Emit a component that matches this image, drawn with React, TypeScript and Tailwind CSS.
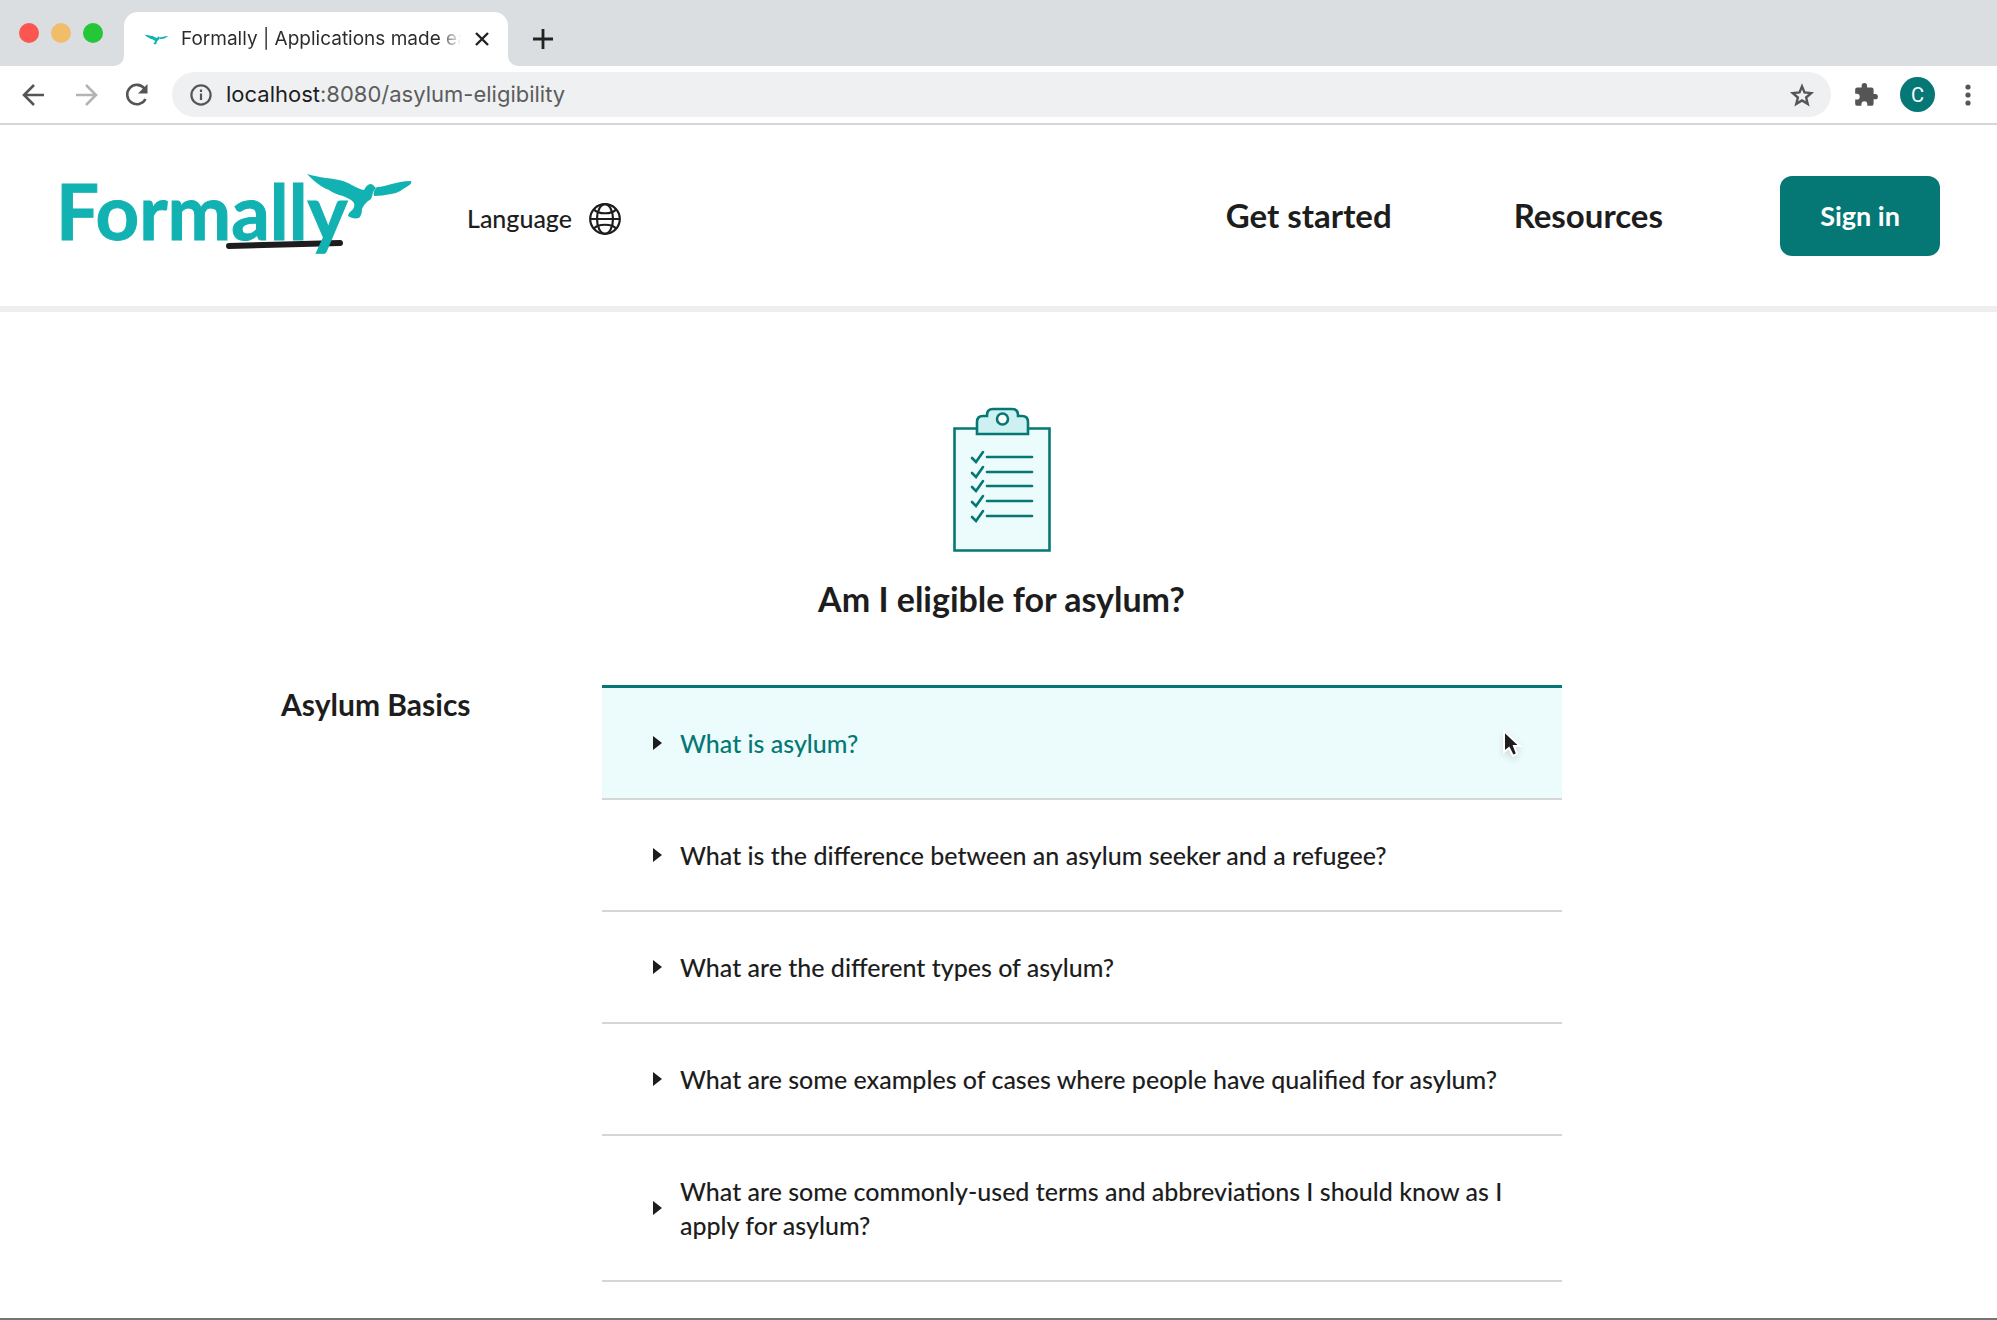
import React, { useState } from "react";

const questions = [
  "What is asylum?",
  "What is the difference between an asylum seeker and a refugee?",
  "What are the different types of asylum?",
  "What are some examples of cases where people have qualified for asylum?",
  "What are some commonly-used terms and abbreviations I should know as I apply for asylum?",
];

const BODY =
  "M2 1C14 5 28 5 38 8C47 11 52 16 59 17C62 11 66 9 69 13L71 15C67 19 68 22 66 26C61 29 59 32 57 36C57 40 56 43 54 45C50 46 46 45 43 43C44 38 48 38 49 34C50 31 49 29 46 27C36 21 30 22 24 17C14 13 8 7 2 1Z";
const WING = "M72 14C82 14 90 8 106 8C107 10 105 12 103 13C96 17 94 20 86 21C80 22 75 23 69 23C68 20 69 17 72 14Z";

function Bird({ className }: { className: string }) {
  return (
    <svg viewBox="0 0 108 48" className={className} fill="#12b1b2" aria-hidden="true">
      <path d={BODY} />
      <path d={WING} />
    </svg>
  );
}

function Logo() {
  return (
    <svg viewBox="0 0 354 90" className="h-[90px] w-[354px] overflow-visible" role="img" aria-label="Formally">
      <path d="M173 75L284 72" stroke="#1d1d1d" strokeWidth="6" strokeLinecap="round" />
      <text
        x="0"
        y="69"
        fill="#12b1b2"
        stroke="#12b1b2"
        strokeWidth="1"
        className="font-['Lato'] text-[76px] font-bold"
      >
        Formally
      </text>
      <g transform="translate(249 2)" fill="#12b1b2">
        <path d={BODY} />
        <path d={WING} />
      </g>
    </svg>
  );
}

function TabStrip() {
  return (
    <div className="flex h-[66px] items-end bg-[#dadee1]">
      <div className="flex h-[66px] w-[124px] items-center gap-3 pl-[19px]">
        <span className="size-5 rounded-full bg-[#fc5650]" />
        <span className="size-5 rounded-full bg-[#f1bd6b]" />
        <span className="size-5 rounded-full bg-[#25c638]" />
      </div>
      <div className="relative flex h-[54px] w-[384px] items-center rounded-t-[14px] bg-white pl-5">
        <svg viewBox="0 0 10 10" className="absolute bottom-0 -left-2.5 size-2.5" fill="#fff" aria-hidden="true">
          <path d="M10 0V10H0A10 10 0 0 0 10 0Z" />
        </svg>
        <svg viewBox="0 0 10 10" className="absolute -right-2.5 bottom-0 size-2.5" fill="#fff" aria-hidden="true">
          <path d="M0 0V10H10A10 10 0 0 1 0 0Z" />
        </svg>
        <Bird className="h-[11px] w-6" />
        <span className="ml-[13px] w-[280px] overflow-hidden bg-linear-to-r from-[#2b2b2b] from-92% to-transparent to-100% bg-clip-text font-['Inter'] text-[19px] whitespace-nowrap text-transparent">
          Formally | Applications made easy
        </span>
        <button aria-label="Close tab" className="ml-[13px]">
          <svg viewBox="0 0 16 16" className="size-4" stroke="#222" strokeWidth="2.4">
            <path d="M2 2L14 14M14 2L2 14" />
          </svg>
        </button>
      </div>
      <button aria-label="New tab" className="mb-[17px] ml-[25px]">
        <svg viewBox="0 0 20 20" className="size-5" stroke="#222" strokeWidth="2.8">
          <path d="M10 0V20M0 10H20" />
        </svg>
      </button>
    </div>
  );
}

function Toolbar() {
  return (
    <div className="flex h-[59px] items-center border-b-2 border-[#d6d6d8] bg-white pr-[18px] pl-[22px]">
      <button aria-label="Back">
        <svg viewBox="0 0 24 24" className="size-6" fill="none" stroke="#555" strokeWidth="2.6">
          <path d="M22 12H3M12 2L2 12L12 22" />
        </svg>
      </button>
      <button aria-label="Forward" className="ml-7">
        <svg viewBox="0 0 24 24" className="size-6" fill="none" stroke="#b4b4b4" strokeWidth="2.6">
          <path d="M2 12H21M12 2L22 12L12 22" />
        </svg>
      </button>
      <button aria-label="Reload" className="ml-[27px]">
        <svg viewBox="0 0 24 24" className="size-6" fill="none" stroke="#555" strokeWidth="2.6">
          <path d="M19.5 5.500A9.700 9.700 0 1 0 20.500 16" />
          <path d="M22.500 1V10.500H13Z" fill="#555" stroke="none" />
        </svg>
      </button>
      <div className="ml-[23px] flex h-[45px] flex-1 items-center rounded-full bg-[#eff0f2] pr-4 pl-[18px]">
        <svg viewBox="0 0 22 22" className="size-[22px]" fill="none" stroke="#555" strokeWidth="2.2">
          <circle cx="11" cy="11" r="9.6" />
          <path d="M11 9.6V16M11 5.6V8" />
        </svg>
        <span className="ml-[14px] flex-1 font-['Inter'] text-[22px] text-[#5c5c5c]">
          <span className="text-[#1d1d1d]">localhost</span>:8080/asylum-eligibility
        </span>
        <button aria-label="Bookmark">
          <svg viewBox="0 0 24 24" className="size-[26px]" fill="none" stroke="#555" strokeWidth="2.2">
            <path d="M12 4L14.300 9.600L20.500 10.200L15.800 14.300L17.300 20.200L12 17L6.700 20.200L8.200 14.300L3.500 10.200L9.700 9.600Z" />
          </svg>
        </button>
      </div>
      <button aria-label="Extensions" className="ml-[22px]">
        <svg viewBox="0 0 24 24" className="size-[26px]" fill="#555">
          <path d="M20.5 11H19V7a2 2 0 0 0-2-2h-4V3.500a2.500 2.500 0 0 0-5 0V5H4a2 2 0 0 0-2 2v3.800h1.500a2.700 2.700 0 0 1 0 5.400H2V20a2 2 0 0 0 2 2h3.800v-1.500a2.700 2.700 0 0 1 5.400 0V22H17a2 2 0 0 0 2-2v-4h1.500a2.500 2.500 0 0 0 0-5z" />
        </svg>
      </button>
      <button className="ml-[21px] flex size-[35px] items-center justify-center rounded-full bg-[#057876] font-['Roboto'] text-xl text-white">
        C
      </button>
      <button aria-label="Menu" className="ml-[22px]">
        <svg viewBox="0 0 22 22" className="size-[22px]" fill="#555">
          <circle cx="11" cy="3" r="2.6" />
          <circle cx="11" cy="11" r="2.6" />
          <circle cx="11" cy="19" r="2.6" />
        </svg>
      </button>
    </div>
  );
}

function Globe() {
  return (
    <svg viewBox="0 0 32 32" className="size-8" fill="none" stroke="#1d1d1d" strokeWidth="2.2">
      <circle cx="16" cy="16" r="14.800" />
      <ellipse cx="16" cy="16" rx="8" ry="14.800" />
      <path d="M1 16H31M5 6.500C9 11.500 23 11.500 27 6.500M5 25.500C9 20.500 23 20.500 27 25.500" />
    </svg>
  );
}

function SiteHeader() {
  return (
    <header className="flex h-[181px] items-center bg-white pr-[57px] pl-14 shadow-[0_6px_0_#eeeeee]">
      <a href="#home">
        <Logo />
      </a>
      <button className="mt-[6px] ml-[57px] flex items-center gap-[17px] text-[25px] font-medium">
        Language
        <Globe />
      </button>
      <nav className="ml-auto flex items-center text-[33px] font-bold">
        <a href="#start">Get started</a>
        <a href="#resources" className="ml-[122px]">
          Resources
        </a>
        <a
          href="#signin"
          className="ml-[117px] flex h-20 w-40 items-center justify-center rounded-xl bg-[#057876] pt-[2px] text-[27px] text-white"
        >
          Sign in
        </a>
      </nav>
    </header>
  );
}

function Clipboard() {
  const rows = [50, 65, 79, 94, 109];
  return (
    <svg viewBox="0 0 98 146" className="h-[146px] w-[98px]" fill="none" stroke="#057876" strokeWidth="2.600">
      <path d="M1.500 21.500H96.500V143.500H1.500Z" fill="#ecfbfb" />
      <path
        d="M24 27V15Q24 9 30 9H34V8Q34 2 40 2H59Q65 2 65 8V9H69Q75 9 75 15V27Z"
        fill="#cdf1f0"
      />
      <circle cx="49.500" cy="12" r="5.500" fill="#fff" />
      {rows.map((y) => (
        <g key={y} strokeLinecap="round">
          <path d={`M34 ${y}H79`} />
          <path d={`M19 ${y + 1}L23 ${y + 5}L30 ${y - 5}`} />
        </g>
      ))}
    </svg>
  );
}

function Pointer() {
  return (
    <svg viewBox="0 0 22 32" className="absolute top-[41px] left-[900px] h-8 w-[22px] drop-shadow-md" aria-hidden="true">
      <path
        d="M2 2V23L7 19L11 27L15 25L12 17H18Z"
        fill="#1d1d1d"
        stroke="#fff"
        strokeWidth="2"
      />
    </svg>
  );
}

export default function App() {
  const [active, setActive] = useState(0);
  return (
    <div className="flex min-h-screen flex-col overflow-hidden border-b-2 border-[#757575] bg-white font-['Lato',sans-serif] text-[#1d1d1d]">
      <TabStrip />
      <Toolbar />
      <SiteHeader />
      <main className="flex-1">
        <div className="flex flex-col items-center pt-[101px] pl-[6px]">
          <Clipboard />
          <h1 className="mt-[26px] text-[34px] leading-10 font-bold">Am I eligible for asylum?</h1>
        </div>
        <section className="mt-[66px] flex pl-[281px]">
          <h2 className="w-[321px] pt-px text-[30px] leading-9 font-bold">Asylum Basics</h2>
          <ul className="w-[960px]">
            {questions.map((q, i) => (
              <li
                key={q}
                className={
                  i === active
                    ? "relative border-t-[3px] border-b-2 border-t-[#057876] border-b-[#d6d6d6] bg-[#ecfbfb] text-[#057876]"
                    : "border-b-2 border-[#d6d6d6]"
                }
              >
                <button
                  onClick={() => setActive(i)}
                  className="flex w-full items-center py-[38px] pr-10 pl-[51px] text-left text-[25px] leading-[34px] font-medium"
                >
                  <svg viewBox="0 0 9 14" className="h-[14px] w-[9px] shrink-0" fill="#1d1d1d" aria-hidden="true">
                    <path d="M0 0L9 7L0 14Z" />
                  </svg>
                  <span className="ml-[18px]">{q}</span>
                </button>
                {i === active && <Pointer />}
              </li>
            ))}
          </ul>
        </section>
      </main>
    </div>
  );
}
